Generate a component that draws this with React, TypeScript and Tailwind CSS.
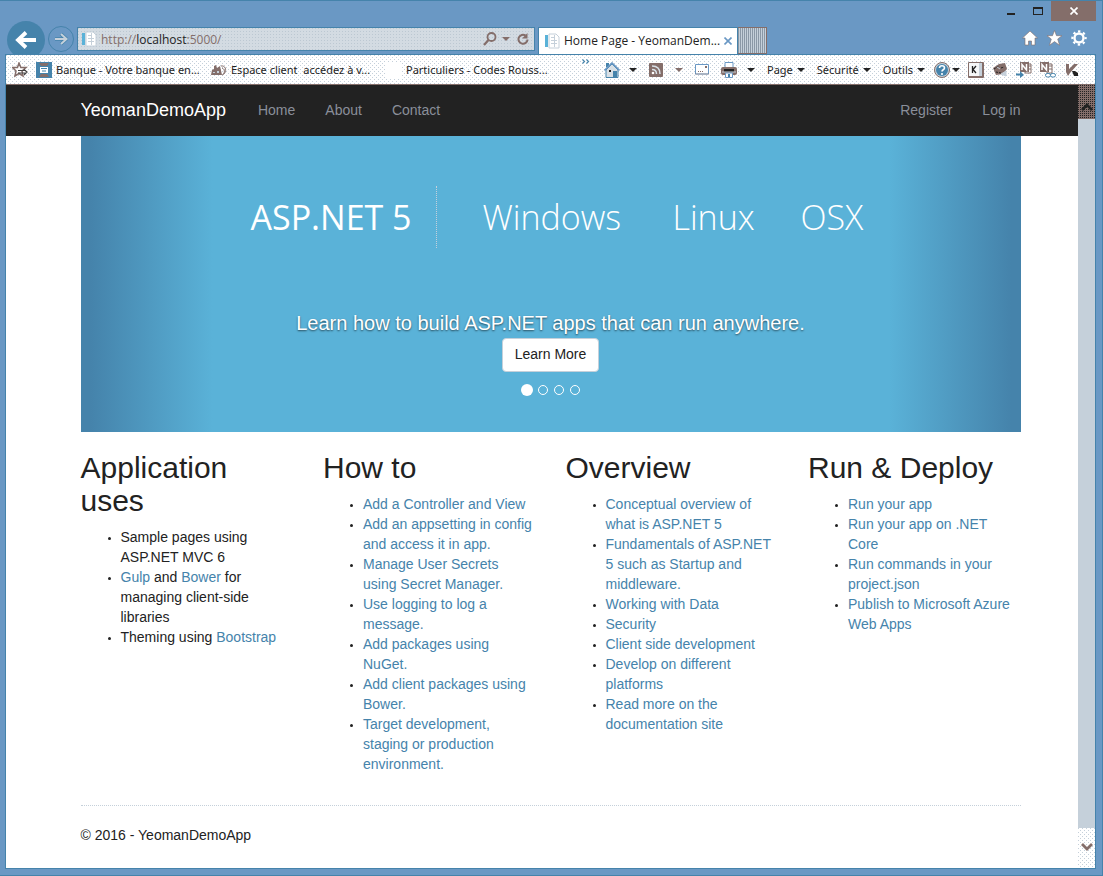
import React, { Fragment } from "react";

const dither =
  "bg-white bg-[conic-gradient(at_1px_1px,transparent_75%,#c5d0da_0),conic-gradient(at_1px_1px,transparent_75%,#c5d0da_0)] bg-[length:4px_4px] bg-[position:0_0,2px_2px]";

type Item = { parts: { text: string; link?: boolean }[] };
const links = (...texts: string[]): Item[] => texts.map((text) => ({ parts: [{ text, link: true }] }));

const columns: { title: string; items: Item[] }[] = [
  {
    title: "Application uses",
    items: [
      { parts: [{ text: "Sample pages using ASP.NET MVC 6" }] },
      {
        parts: [
          { text: "Gulp", link: true },
          { text: " and " },
          { text: "Bower", link: true },
          { text: " for managing client-side libraries" },
        ],
      },
      { parts: [{ text: "Theming using " }, { text: "Bootstrap", link: true }] },
    ],
  },
  {
    title: "How to",
    items: links(
      "Add a Controller and View",
      "Add an appsetting in config and access it in app.",
      "Manage User Secrets using Secret Manager.",
      "Use logging to log a message.",
      "Add packages using NuGet.",
      "Add client packages using Bower.",
      "Target development, staging or production environment.",
    ),
  },
  {
    title: "Overview",
    items: links(
      "Conceptual overview of what is ASP.NET 5",
      "Fundamentals of ASP.NET 5 such as Startup and middleware.",
      "Working with Data",
      "Security",
      "Client side development",
      "Develop on different platforms",
      "Read more on the documentation site",
    ),
  },
  {
    title: "Run & Deploy",
    items: links(
      "Run your app",
      "Run your app on .NET Core",
      "Run commands in your project.json",
      "Publish to Microsoft Azure Web Apps",
    ),
  },
];

function Caret({ muted = false }: { muted?: boolean }) {
  return (
    <svg width="8" height="4" viewBox="0 0 8 4" className="shrink-0" aria-hidden="true">
      <path d="M0 0h8L4 4z" fill={muted ? "#846e6a" : "#222"} />
    </svg>
  );
}

function PageIcon() {
  return (
    <svg width="16" height="16" viewBox="0 0 16 16" className="shrink-0" aria-hidden="true">
      <path d="M1 2h3v12H1z" fill="#5ab2d8" />
      <path d="M5 1h7l3 3v11H5z" fill="#fff" stroke="#c5d0da" />
      <path d="M7 4.500h4M7 7.500h6M7 10.500h6M10.500 2v12" stroke="#c5d0da" />
    </svg>
  );
}

function WindowControls() {
  return (
    <div className="flex h-5 justify-end">
      <button aria-label="Minimize" className="flex w-[27px] items-center justify-center">
        <svg width="8" height="12" viewBox="0 0 8 12"><path d="M0 8h8v2H0z" fill="#222" /></svg>
      </button>
      <button aria-label="Maximize" className="flex w-[27px] items-center justify-center">
        <svg width="10" height="8" viewBox="0 0 10 8"><path d="M0 0h10v8H0zM1 2v5h8V2z" fill="#222" fillRule="evenodd" /></svg>
      </button>
      <button aria-label="Close" className="flex w-[45px] items-center justify-center bg-[#846e6a]">
        <svg width="8" height="8" viewBox="0 0 8 8"><path d="M.5.5l7 7M7.500.5l-7 7" stroke="#fff" strokeWidth="1.700" /></svg>
      </button>
    </div>
  );
}

function AddressRow() {
  return (
    <div className="flex h-[33px] items-start overflow-hidden pl-[2px]">
      <button aria-label="Back" className="flex size-[38px] shrink-0 items-center justify-center rounded-full bg-[#4583ab]">
        <svg width="22" height="18" viewBox="0 0 22 18">
          <path d="M21 9H4M11 1.500L3 9l8 7.500" fill="none" stroke="#fff" strokeWidth="3.800" />
        </svg>
      </button>
      <button aria-label="Forward" className="mt-[5px] ml-[3px] flex size-[26px] shrink-0 items-center justify-center rounded-full border border-[#4583ab]">
        <svg width="14" height="14" viewBox="0 0 14 14">
          <path d="M1 7h11M7 2l5.500 5L7 12" fill="none" stroke="#4583ab" strokeWidth="3.600" />
          <path d="M1 7h11M7 2l5.500 5L7 12" fill="none" stroke="#c5d0da" strokeWidth="2" />
        </svg>
      </button>
      <div className="mt-[6px] ml-[3px] flex h-6 min-w-0 max-w-[458px] flex-1 items-center border border-[#4583ab] bg-[#d3dbe2] bg-[conic-gradient(at_1px_1px,transparent_75%,#bcc8d2_0)] bg-[length:3px_3px] pr-[5px] pl-[3px]">
        <PageIcon />
        <div className="ml-1 min-w-0 flex-1 truncate pt-[2px] text-[12px] leading-4 text-[#846e6a]">
          http://<span className="text-[#222]">localhost</span>:5000/
        </div>
        <button aria-label="Search">
          <svg width="14" height="14" viewBox="0 0 14 14" fill="none" stroke="#846e6a">
            <circle cx="8.500" cy="5" r="4" strokeWidth="1.800" /><path d="M5.500 8L1 13" strokeWidth="2.200" />
          </svg>
        </button>
        <button aria-label="Search options" className="ml-[5px]"><Caret muted /></button>
        <button aria-label="Refresh" className="ml-[7px]">
          <svg width="12" height="14" viewBox="0 0 12 14">
            <path d="M8.500 3.500A4.500 4.500 0 1 0 10.500 7.500" fill="none" stroke="#846e6a" strokeWidth="2" /><path d="M10.500 1v5.500H5z" fill="#846e6a" />
          </svg>
        </button>
      </div>
      <div className="mt-[6px] ml-[3px] flex h-[27px] w-[200px] items-center border border-b-0 border-[#4583ab] bg-white pr-[5px] pl-[5px]">
        <PageIcon />
        <span className="ml-1 flex-1 truncate text-[12px] leading-4 text-[#222]">Home Page - YeomanDem...</span>
        <button aria-label="Close tab">
          <svg width="8" height="8" viewBox="0 0 8 8"><path d="M.5.5l7 7M7.500.5l-7 7" stroke="#6a98c4" strokeWidth="1.600" /></svg>
        </button>
      </div>
      <button
        aria-label="New tab"
        className="mt-[6px] h-[27px] w-[29px] shrink-0 border border-l-0 border-[#846e6a] bg-[repeating-linear-gradient(90deg,#8a98a6_0_1px,#c5d0da_1px_2px)]"
      />
      <div className="mt-[9px] mr-[9px] ml-auto flex items-center gap-[8px]">
        <button aria-label="Home page">
          <svg width="16" height="16" viewBox="0 0 16 16"><path d="M8 1l7.500 7H13v7H9.500v-4h-3v4H3V8H.5z" fill="#fff" stroke="#846e6a" strokeWidth=".6" /></svg>
        </button>
        <button aria-label="Favorites">
          <svg width="17" height="16" viewBox="0 0 16 16"><path d="M8 .5l2 5.200h5.500L11.200 9l1.800 6.200-5-3.600-5 3.600L4.800 9 .5 5.700H6z" fill="#fff" stroke="#846e6a" strokeWidth=".6" /></svg>
        </button>
        <button aria-label="Tools">
          <svg width="16" height="16" viewBox="0 0 16 16" fill="none" stroke="#fff">
            <circle cx="8" cy="8" r="4.500" strokeWidth="2.400" />
            <circle cx="8" cy="8" r="6.600" strokeWidth="2.200" strokeDasharray="2.400 2.784" strokeDashoffset="1.200" />
          </svg>
        </button>
      </div>
    </div>
  );
}

function Favorite({ text, children }: { text: string; children: React.ReactNode }) {
  return (
    <a href="#" className="flex w-[175px] min-w-0 items-center gap-1">
      {children}
      <span className="whitespace-pre">{text}</span>
    </a>
  );
}

function Toolbar() {
  return (
    <div className={`flex h-[30px] items-center border-b border-[#846e6a] pl-[6px] font-['Noto_Sans',sans-serif] text-[11px] leading-4 text-[#222] ${dither}`}>
      <button aria-label="Add to favorites" className="mr-2 shrink-0">
        <svg width="16" height="16" viewBox="0 0 16 16" fill="none" stroke="#846e6a" strokeWidth="1.500">
          <path d="M7 1l1.800 4.500H14L10 9l1 5-4-2.500L3 14l1-5L.5 5.500h5z" fill="#fff" /><path d="M6 8.500h8M6 11h8M12 7.500l3 2.500-3 3" stroke="#444" strokeWidth="1.200" />
        </svg>
      </button>
      <Favorite text="Banque - Votre banque en...">
        <svg width="16" height="16" viewBox="0 0 16 16" className="shrink-0">
          <path d="M0 0h16v16H0z" fill="#4583ab" /><path d="M3 1h10l-2 3H5zM5 12h6l2 3H3z" fill="#846e6a" /><path d="M4 5h8v6H4z" fill="#fff" /><path d="M5 6.500h6M6 9h4" stroke="#4583ab" />
        </svg>
      </Favorite>
      <Favorite text="Espace client  accédez à v...">
        <svg width="16" height="16" viewBox="0 0 16 16" className="shrink-0">
          <path d="M0 13l1-5 2-1V4l2-1 1 3 3-2 2 9z" fill="#846e6a" /><path d="M10 4c6-1 6 8 1 9M11 6c3 1 3 5 1 6M3 9v2M6 8v2" fill="none" stroke="#846e6a" /><path d="M2 10h2v1H2zM6 9h2v2H6z" fill="#c5d0da" />
        </svg>
      </Favorite>
      <Favorite text="Particuliers - Codes Rouss...">
        <span className="size-4 shrink-0 bg-white" />
      </Favorite>
      <button aria-label="More favorites" className="mb-[17px] ml-auto">
        <svg width="8" height="5" viewBox="0 0 8 5"><path d="M.5.5l2 2-2 2M4.500.5l2 2-2 2" fill="none" stroke="#4583ab" strokeWidth="1.200" /></svg>
      </button>
      <div className="ml-[14px] flex shrink-0 items-center gap-3">
        <button aria-label="Home" className="flex items-center gap-[9px]">
          <svg width="16" height="16" viewBox="0 0 16 16">
            <path d="M2 1h3v4H2z" fill="#4583ab" /><path d="M2 8l6-6 6 6v7.500H2z" fill="#d8e0e6" stroke="#4583ab" /><path d="M.5 8.500L8 1l7.500 7.500" fill="none" stroke="#6a98c4" strokeWidth="1.600" /><path d="M9 9h4v6H9z" fill="#4583ab" /><path d="M5 8h2v2H5z" fill="#222" />
          </svg>
          <Caret />
        </button>
        <button aria-label="Feeds" className="flex items-center gap-3">
          <svg width="14" height="14" viewBox="0 0 14 14"><rect width="14" height="14" rx="1" fill="#846e6a" /><g fill="none" stroke="#d8e0e6" strokeWidth="1.500"><path d="M3 3c5 0 8 3 8 8M3 6.500c3 0 4.500 1.500 4.500 4.500" /></g><circle cx="4" cy="10" r="1.300" fill="#fff" /></svg>
          <Caret muted />
        </button>
        <button aria-label="Read mail">
          <svg width="14" height="11" viewBox="0 0 14 11"><path d="M.5.5h13v9.500H.5z" fill="#fff" stroke="#6a98c4" /><path d="M10 2h2v2h-2z" fill="#846e6a" /><path d="M3 7.500h6M.5 10h13" stroke="#846e6a" strokeDasharray="1 1" /></svg>
        </button>
        <button aria-label="Print" className="flex items-center gap-[10px]">
          <svg width="16" height="16" viewBox="0 0 16 16"><path d="M4 .5h8V6H4z" fill="#fff" stroke="#6a98c4" /><rect y="5" width="16" height="8" rx="2" fill="#846e6a" /><path d="M3 7h10v3H3z" fill="#222" /><path d="M1 10h14" stroke="#c5d0da" /><path d="M4.500 11h7v4.500h-7z" fill="#fff" stroke="#6a98c4" /><path d="M7 12h2v3H7z" fill="#4583ab" /></svg>
          <Caret />
        </button>
        <button className="flex items-center gap-1">Page<Caret /></button>
        <button className="flex items-center gap-1">Sécurité<Caret /></button>
        <button className="flex items-center gap-1">Outils<Caret /></button>
      </div>
      <div className="mr-4 ml-[9px] flex shrink-0 items-center gap-2">
        <button aria-label="Help" className="flex items-center gap-[2px]">
          <svg width="16" height="16" viewBox="0 0 16 16"><circle cx="8" cy="8" r="7.500" fill="#c5d0da" stroke="#846e6a" /><circle cx="8" cy="8" r="6" fill="#4583ab" /><path d="M5.500 6c0-3 5-3 5 0 0 2-2.500 1.500-2.500 3.500M8 11v2" fill="none" stroke="#fff" strokeWidth="1.600" /></svg>
          <Caret />
        </button>
        <button aria-label="Virtual keyboard">
          <svg width="16" height="16" viewBox="0 0 16 16"><path d="M.5.5h15v15H.5z" fill="#c5d0da" stroke="#846e6a" /><path d="M1 1h10v13H1z" fill="#f5f7f8" /><path d="M4.500 4v7M8 4L5 7.500 8 11" fill="none" stroke="#222" strokeWidth="1.300" /><path d="M1 15h14M15 1v14" stroke="#846e6a" strokeWidth="2" /></svg>
        </button>
        <button aria-label="Web advisor">
          <svg width="16" height="16" viewBox="0 0 16 16"><path d="M1 6l6-4 6-1 2 6-4 5-7 1z" fill="#846e6a" /><path d="M2 7l5-3M9 6l3-1M4 10l5 1" stroke="#222" strokeDasharray="2 1" /><path d="M5 5l3 2M9 12l5-3v5z" stroke="#c5d0da" fill="#c5d0da" /></svg>
        </button>
        <button aria-label="Send to OneNote">
          <svg width="16" height="16" viewBox="0 0 16 16"><path d="M9 2h6v9H9z" fill="#fff" stroke="#846e6a" /><path d="M4 0h9v10H4z" fill="#846e6a" /><path d="M6 8V2.500L10.500 8V2" fill="none" stroke="#fff" strokeWidth="1.500" /><path d="M12 4h3M12 7h3" stroke="#846e6a" /><path d="M0 11.500h4V9l4 4-4 3v-2.500H0z" fill="#4583ab" /></svg>
        </button>
        <button aria-label="OneNote linked notes">
          <svg width="16" height="16" viewBox="0 0 16 16"><path d="M7 2h5v9H7z" fill="#fff" stroke="#846e6a" /><path d="M0 0h9v10H0z" fill="#846e6a" /><path d="M2 8V2.500L6.500 8V2" fill="none" stroke="#fff" strokeWidth="1.500" /><path d="M9 4h3M9 7h3" stroke="#846e6a" /><rect x="5.500" y="11.500" width="5" height="3.500" rx="1.700" fill="#fff" stroke="#4583ab" /><rect x="10.500" y="11.500" width="5" height="3.500" rx="1.700" fill="#fff" stroke="#4583ab" /></svg>
        </button>
        <button aria-label="Security module" className="ml-[2px]">
          <svg width="13" height="14" viewBox="0 0 13 14"><path d="M0 1h3v5l5-5h4L4 10l-2 3L0 9z" fill="#846e6a" /><path d="M6 8h3l3 2v3H8z" fill="#222" /></svg>
        </button>
      </div>
    </div>
  );
}

function Navbar() {
  return (
    <nav className="bg-[#222]">
      <div className="mx-auto flex h-[51px] max-w-[970px] items-center px-[15px] pb-[2px] text-[14px] leading-5 text-[#8a8f9a]">
        <a href="#" className="mr-8 text-[18px] text-white">YeomanDemoApp</a>
        <div className="flex gap-[30px]">
          <a href="#">Home</a>
          <a href="#">About</a>
          <a href="#">Contact</a>
        </div>
        <div className="ml-auto flex gap-[30px]">
          <a href="#">Register</a>
          <a href="#">Log in</a>
        </div>
      </div>
    </nav>
  );
}

function Carousel() {
  return (
    <section className="flex h-[296px] flex-col items-center bg-[#5ab2d8] bg-[linear-gradient(90deg,#4583ab_0,#4583ab_1%,#5ab2d8_14%,#5ab2d8_86%,#4583ab_99%)] text-white">
      <div className="mt-[50px] flex h-[62px] w-full items-center pl-[170px] font-['Open_Sans',sans-serif] text-[34px] leading-[48px] whitespace-nowrap">
        <span className="w-[185px]">ASP.NET 5</span>
        <span className="mr-[46px] h-[62px] border-l border-dotted border-[#c5d0da]" />
        <span className="w-[190px] font-light">Windows</span>
        <span className="w-[128px] font-light">Linux</span>
        <span className="font-light">OSX</span>
      </div>
      <p className="mt-[60px] text-[20px] leading-[30px] [text-shadow:0_1px_2px_rgba(0,0,0,0.6)]">
        Learn how to build ASP.NET apps that can run anywhere.
      </p>
      <button className="h-[34px] rounded-[4px] border border-[#c5d0da] bg-white px-3 pb-[2px] text-[14px] leading-5 text-[#222]">Learn More</button>
      <div className="mt-3 flex h-3 items-center gap-[6px]">
        <button aria-label="Slide 1" className="-mr-px size-3 rounded-full bg-white" />
        <button aria-label="Slide 2" className="size-[10px] rounded-full border border-white" />
        <button aria-label="Slide 3" className="size-[10px] rounded-full border border-white" />
        <button aria-label="Slide 4" className="size-[10px] rounded-full border border-white" />
      </div>
    </section>
  );
}

function Scrollbar() {
  return (
    <div className="absolute inset-y-0 right-0 flex w-[17px] flex-col bg-[#c5d0da]" aria-hidden="true">
      <div className="flex h-[34px] items-center justify-center bg-[#846e6a] bg-[conic-gradient(at_1px_1px,transparent_75%,#222_0)] bg-[length:2px_2px] pt-[10px]">
        <svg width="12" height="8" viewBox="0 0 12 8"><path d="M1 7l5-5 5 5" fill="none" stroke="#222" strokeWidth="2.800" /></svg>
      </div>
      <div className="flex-1 bg-[#c5d0da]" />
      <div className={`flex h-10 items-center justify-center pb-[2px] ${dither}`}>
        <svg width="12" height="8" viewBox="0 0 12 8"><path d="M1 1l5 5 5-5" fill="none" stroke="#846e6a" strokeWidth="2.800" /></svg>
      </div>
    </div>
  );
}

export default function App() {
  return (
    <div className="flex min-h-screen flex-col border-t border-r border-b border-[#4583ab] bg-[#6a98c4] pr-[6px] pb-[6px] pl-[5px] font-['Open_Sans',sans-serif]">
      <WindowControls />
      <AddressRow />
      <div className="flex flex-1 flex-col border border-[#4583ab] bg-white">
        <Toolbar />
        <div className="relative flex-1 font-['Liberation_Sans',Arial,sans-serif] text-[14px] leading-5 text-[#222]">
          <Navbar />
          <main className="mx-auto max-w-[970px] px-[15px]">
            <Carousel />
            <div className="grid grid-cols-4 gap-x-[30px] pt-[19px]">
              {columns.map((column) => (
                <section key={column.title}>
                  <h2 className="mb-[10px] text-[30px] leading-[33px]">{column.title}</h2>
                  <ul className="mb-[10px] list-disc pl-10">
                    {column.items.map((item, i) => (
                      <li key={i} className="marker:text-[10px]">
                        {item.parts.map((part, j) =>
                          part.link ? (
                            <a key={j} href="#" className="text-[#4583ab]">{part.text}</a>
                          ) : (
                            <Fragment key={j}>{part.text}</Fragment>
                          ),
                        )}
                      </li>
                    ))}
                  </ul>
                </section>
              ))}
            </div>
            <hr className="mt-[21px] mb-[19px] border-t border-dotted border-[#c5d0da]" />
            <footer>© 2016 - YeomanDemoApp</footer>
          </main>
          <Scrollbar />
        </div>
      </div>
    </div>
  );
}
